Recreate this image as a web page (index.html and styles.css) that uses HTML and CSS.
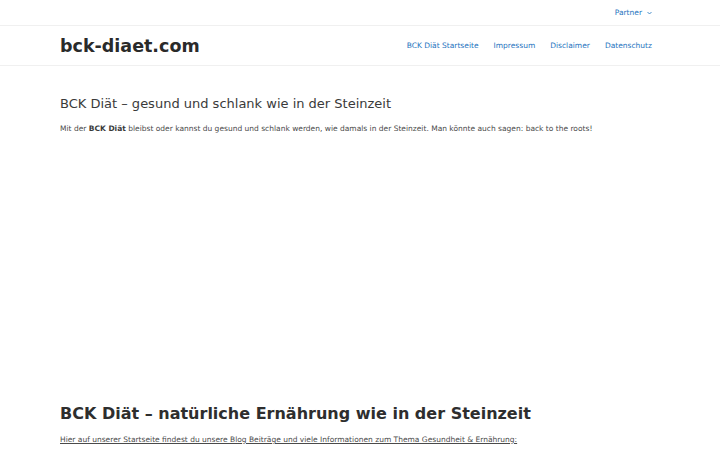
FILE: index.html
```html
<!DOCTYPE html>
<html lang="de">
<head>
<meta charset="utf-8">
<title>bck-diaet.com</title>
<link rel="stylesheet" href="styles.css">
</head>
<body>
<div class="topbar">
  <div class="container topbar-inner">
    <a class="top-link" href="#">Partner <span class="chev"><svg width="5" height="4" viewBox="0 0 5 4"><path d="M0.5 1 L2.5 3 L4.5 1" fill="none" stroke="#1e73be" stroke-width="0.8"/></svg></span></a>
  </div>
</div>
<header class="header">
  <div class="container header-inner">
    <a class="logo" href="#">bck-diaet.com</a>
    <nav class="nav">
      <a href="#">BCK Diät Startseite</a>
      <a href="#">Impressum</a>
      <a href="#">Disclaimer</a>
      <a href="#">Datenschutz</a>
    </nav>
  </div>
</header>
<main class="container main">
  <h1 class="title">BCK Diät – gesund und schlank wie in der Steinzeit</h1>
  <p class="intro">Mit der <strong>BCK Diät</strong> bleibst oder kannst du gesund und schlank werden, wie damals in der Steinzeit. Man könnte auch sagen: back to the roots!</p>
  <div class="ad"></div>
  <h2 class="subtitle">BCK Diät – natürliche Ernährung wie in der Steinzeit</h2>
  <p class="intro2"><a href="#">Hier auf unserer Startseite findest du unsere Blog Beiträge und viele Informationen zum Thema Gesundheit &amp; Ernährung:</a></p>
</main>
</body>
</html>
```
FILE: styles.css
```css
html, body { margin: 0; padding: 0; background: #fff; }
body { font-family: "DejaVu Sans", sans-serif; color: #3a3a3a; }
a { text-decoration: none; }
.container { width: 600px; margin: 0 auto; }

.topbar { height: 25px; border-bottom: 1px solid #f0f0f0; }
.topbar-inner { display: flex; justify-content: flex-end; align-items: center; height: 25px; }
.top-link { font-size: 7.5px; color: #1e73be; padding-right: 8px; display: flex; align-items: center; gap: 5px; }
.chev { display: inline-flex; }

.header { border-bottom: 1px solid #f0f0f0; }
.header-inner { height: 39px; display: flex; align-items: center; justify-content: space-between; }
.logo { font-size: 17.5px; font-weight: bold; color: #2a2a2a; }
.nav { display: flex; gap: 15px; padding-right: 8px; }
.nav a { font-size: 7.5px; color: #1e73be; }

.main { padding-top: 28px; }
.title { font-size: 13px; line-height: 15px; font-weight: normal; color: #3a3a3a; margin: 2px 0 13px; }
.intro { font-size: 7.5px; line-height: 9px; color: #4a4a4a; margin: 0; }
.intro strong { font-weight: bold; color: #3a3a3a; }
.ad { height: 271px; }
.subtitle { font-size: 16px; line-height: 19px; font-weight: bold; color: #2e2e2e; margin: 0 0 12px; }
.intro2 { font-size: 7.5px; line-height: 9px; margin: 0; }
.intro2 a { color: #4a4a4a; text-decoration: underline; }
```
